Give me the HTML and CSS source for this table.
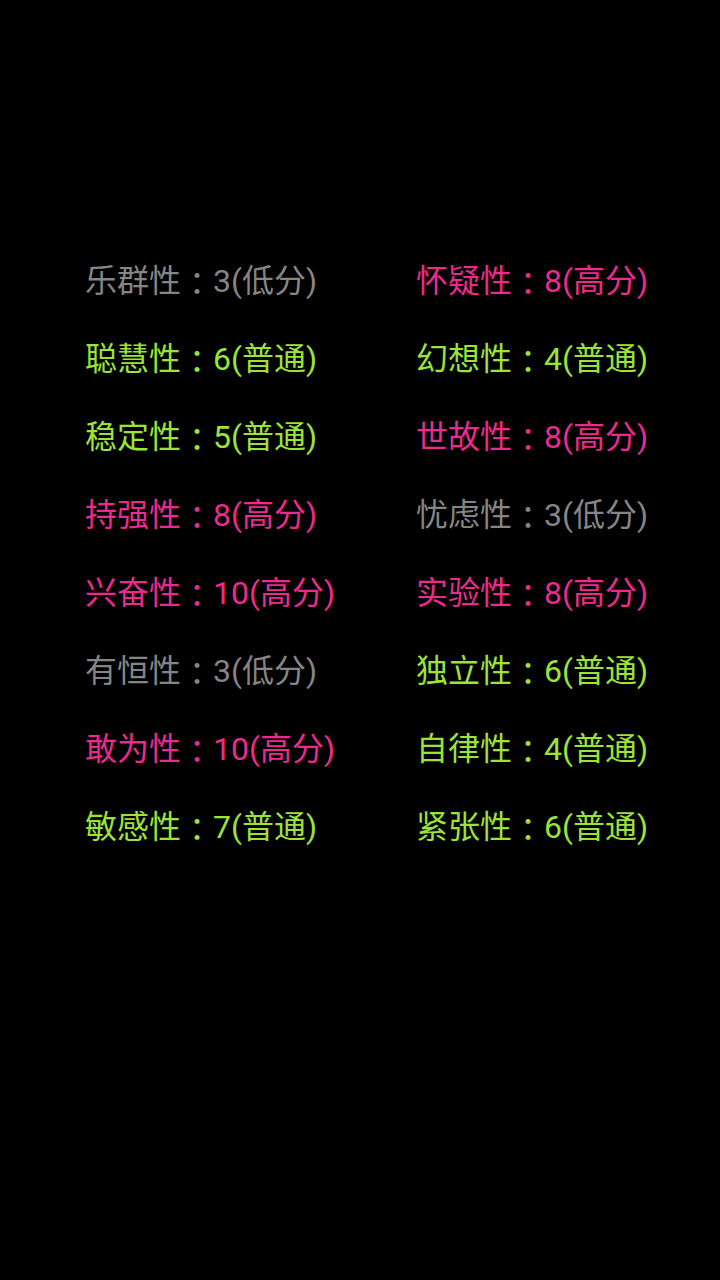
FILE: index.html
```html
<!DOCTYPE html>
<html lang="zh-CN">
<head>
<meta charset="utf-8">
<link rel="stylesheet" href="styles.css">
</head>
<body>
<div class="grid">
  <div class="item low">乐群性<span class="colon" lang="zh-TW">：</span>3(低分)</div>
  <div class="item high">怀疑性<span class="colon" lang="zh-TW">：</span>8(高分)</div>
  <div class="item mid">聪慧性<span class="colon" lang="zh-TW">：</span>6(普通)</div>
  <div class="item mid">幻想性<span class="colon" lang="zh-TW">：</span>4(普通)</div>
  <div class="item mid">稳定性<span class="colon" lang="zh-TW">：</span>5(普通)</div>
  <div class="item high">世故性<span class="colon" lang="zh-TW">：</span>8(高分)</div>
  <div class="item high">持强性<span class="colon" lang="zh-TW">：</span>8(高分)</div>
  <div class="item low">忧虑性<span class="colon" lang="zh-TW">：</span>3(低分)</div>
  <div class="item high">兴奋性<span class="colon" lang="zh-TW">：</span>10(高分)</div>
  <div class="item high">实验性<span class="colon" lang="zh-TW">：</span>8(高分)</div>
  <div class="item low">有恒性<span class="colon" lang="zh-TW">：</span>3(低分)</div>
  <div class="item mid">独立性<span class="colon" lang="zh-TW">：</span>6(普通)</div>
  <div class="item high">敢为性<span class="colon" lang="zh-TW">：</span>10(高分)</div>
  <div class="item mid">自律性<span class="colon" lang="zh-TW">：</span>4(普通)</div>
  <div class="item mid">敏感性<span class="colon" lang="zh-TW">：</span>7(普通)</div>
  <div class="item mid">紧张性<span class="colon" lang="zh-TW">：</span>6(普通)</div>
</div>
</body>
</html>
```

FILE: styles.css
```css
html, body {
  margin: 0;
  padding: 0;
  background: #000;
  width: 720px;
  height: 1280px;
  overflow: hidden;
}
body {
  font-family: Roboto, "Noto Sans CJK SC", sans-serif;
}
.grid {
  display: grid;
  grid-template-columns: 331px auto;
  grid-auto-rows: 78px;
  padding: 242px 0 0 85px;
}
.item {
  font-size: 32px;
  line-height: 78px;
  white-space: nowrap;
}
.colon {
  font-family: "Noto Sans CJK TC", "Noto Sans CJK JP", sans-serif;
  line-height: 0;
  vertical-align: -3px;
}
.low { color: #858585; }
.mid { color: #9be336; }
.high { color: #ec2a8e; }
```
